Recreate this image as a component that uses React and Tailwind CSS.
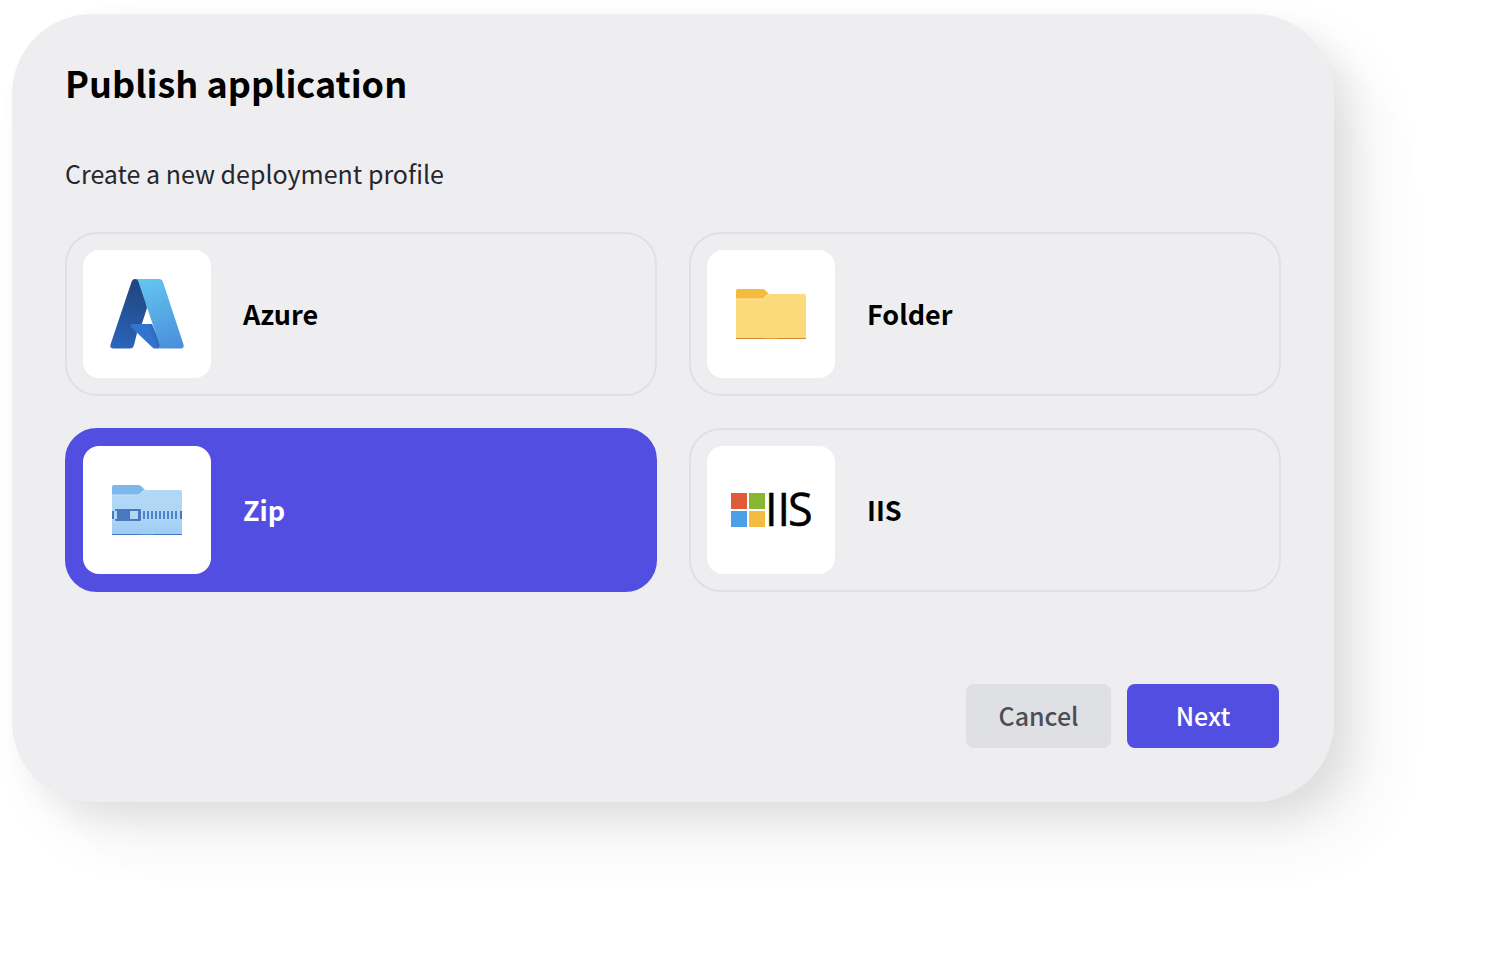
import React, { useState } from "react";

function AzureIcon() {
  return (
    <svg viewBox="0 0 128 128" className="w-full h-full" aria-hidden="true">
      <defs>
        <linearGradient id="azureLeft" x1="55" y1="30" x2="40" y2="99" gradientUnits="userSpaceOnUse">
          <stop offset="0" stopColor="#20457f" />
          <stop offset="0.5" stopColor="#25549b" />
          <stop offset="1" stopColor="#2a66bb" />
        </linearGradient>
        <linearGradient id="azureRight" x1="62" y1="30" x2="88" y2="98" gradientUnits="userSpaceOnUse">
          <stop offset="0" stopColor="#64c5ef" />
          <stop offset="1" stopColor="#4990dc" />
        </linearGradient>
        <linearGradient id="azureFold" x1="58" y1="86" x2="75" y2="80" gradientUnits="userSpaceOnUse">
          <stop offset="0.5" stopColor="#3275d0" />
          <stop offset="1" stopColor="#2a5fad" />
        </linearGradient>
      </defs>
      <path
        d="M52 29H60L64 58L58.500 75H52L54 83L51 95Q50 98.500 47 98.500H30.500Q26.500 98.500 27.500 94.500L48.500 32Q49.500 29 52 29Z"
        fill="url(#azureLeft)"
      />
      <path
        d="M49 74H69L77 93Q78 98.500 74 98.500H71.500Q70.500 98.500 69 97L48 77Q46.500 74.500 49 74Z"
        fill="url(#azureFold)"
      />
      <path
        d="M52 29H76Q79 29 80 32L100.500 94.500Q101.500 98.500 97.500 98.500H73.500Q77.500 98.500 76.500 94.500L55.500 32Q54.500 29 52 29Z"
        fill="url(#azureRight)"
      />
    </svg>
  );
}

function FolderIcon() {
  return (
    <svg viewBox="0 0 128 128" className="w-full h-full" aria-hidden="true">
      <defs>
        <linearGradient id="folderBody" x1="0" y1="0" x2="0" y2="1">
          <stop offset="0" stopColor="#fadb7b" />
          <stop offset="1" stopColor="#fad978" />
        </linearGradient>
      </defs>
      <path d="M29 50V41Q29 39 31 39H55Q57 39 58 40L62 44L55 50Z" fill="#f5bb41" />
      <path d="M29 49H54Q56 49 57 48L60 45Q61 44 63 44H97Q99 44 99 46V89H29Z" fill="url(#folderBody)" />
      <path d="M29 49H54Q56 49 57 48L60 45Q61 44 63 44" fill="none" stroke="#fbe7a8" />
      <path d="M29 88H99V89H29Z" fill="#d08835" />
      <path d="M57 88H71V89H57Z" fill="#e19c3b" />
    </svg>
  );
}

function ZipIcon() {
  const teeth = [60, 64, 68, 72, 76, 80, 84, 88, 92];
  return (
    <svg viewBox="0 0 128 128" className="w-full h-full" aria-hidden="true">
      <defs>
        <linearGradient id="zipBody" x1="0" y1="0" x2="0" y2="1">
          <stop offset="0" stopColor="#b2d8f6" />
          <stop offset="0.6" stopColor="#afd5f5" />
          <stop offset="1" stopColor="#9bccf3" />
        </linearGradient>
      </defs>
      <path d="M29 50V41Q29 39 31 39H55Q57 39 58 40L62 44L55 50Z" fill="#7db8ec" />
      <path d="M29 49H54Q56 49 57 48L60 45Q61 44 63 44H97Q99 44 99 46V89H29Z" fill="url(#zipBody)" />
      <path d="M29 49H54Q56 49 57 48L60 45Q61 44 63 44" fill="none" stroke="#c8e4fa" />
      <path d="M29 88H99V89H29Z" fill="#4277bf" />
      <path d="M57 88H71V89H57Z" fill="#5289cf" />
      <rect x="29" y="65" width="2" height="8" fill="#4778c0" />
      {teeth.map((x) => (
        <rect key={x} x={x} y="65" width="2" height="8" fill="#5184c8" />
      ))}
      <rect x="97" y="65" width="2" height="8" fill="#4778c0" />
      <rect x="32" y="63" width="26" height="12" rx="1" fill="#4778c0" />
      <rect x="32" y="65" width="2" height="8" fill="#b5d6f3" />
      <rect x="47" y="65" width="8" height="8" fill="#b5d6f3" />
    </svg>
  );
}

function IisIcon() {
  return (
    <svg viewBox="0 0 128 128" className="w-full h-full" aria-hidden="true">
      <rect x="24" y="47" width="16" height="16" fill="#de5c37" />
      <rect x="42" y="47" width="16" height="16" fill="#8ab636" />
      <rect x="24" y="65" width="16" height="16" fill="#4a9fe8" />
      <rect x="42" y="65" width="16" height="16" fill="#f4bb42" />
      <text x="58" y="80" fontSize="45" fill="#000" stroke="#000" strokeWidth="0.5" fontFamily="'Open Sans', sans-serif">
        <tspan>II</tspan>
        <tspan x="81">S</tspan>
      </text>
    </svg>
  );
}

const profiles = [
  { id: "azure", name: "Azure", Icon: AzureIcon },
  { id: "folder", name: "Folder", Icon: FolderIcon },
  { id: "zip", name: "Zip", Icon: ZipIcon },
  { id: "iis", name: "IIS", Icon: IisIcon },
];

function App() {
  const [selected, setSelected] = useState("zip");

  return (
    <div className="pt-[14px] pl-3 pr-[174px] pb-24 font-['Noto_Sans_CJK_SC',sans-serif]">
      <form
        className="rounded-[80px] bg-[#eeeef0] px-[53px] pt-11 pb-[54px] shadow-[16px_16px_32px_rgba(0,0,0,0.07),32px_32px_64px_rgba(0,0,0,0.06),64px_64px_96px_rgba(0,0,0,0.01)]"
        onSubmit={(e) => e.preventDefault()}
      >
        <h1 className="text-[36px] leading-12 font-bold text-black">Publish application</h1>
        <fieldset className="mt-[51px]">
          <legend className="text-[25px] leading-8 text-[#26262c]">Create a new deployment profile</legend>
          {/* Deployment targets */}
          <div className="mt-[43px] grid grid-cols-2 gap-8">
            {profiles.map(({ id, name, Icon }) => (
              <label
                key={id}
                className={`flex items-center gap-8 rounded-[32px] border-2 p-4 cursor-pointer ${
                  selected === id
                    ? "border-[#524ee1] bg-[#524ee1] text-white"
                    : "border-[#e0e0e3] text-black"
                }`}
              >
                <input
                  type="radio"
                  name="profile"
                  value={id}
                  checked={selected === id}
                  onChange={() => setSelected(id)}
                  className="sr-only"
                />
                <span className="size-32 shrink-0 overflow-hidden rounded-2xl bg-white">
                  <Icon />
                </span>
                <span className="text-[27px] leading-8 font-bold">{name}</span>
              </label>
            ))}
          </div>
        </fieldset>
        <div className="mt-[92px] flex justify-end gap-4 pr-[2px] text-[25px] leading-8 font-medium">
          <button type="button" className="h-16 w-[145px] rounded-lg bg-[#dfe0e4] pb-[2px] text-[#4d4e55]">
            Cancel
          </button>
          <button type="submit" className="h-16 w-[152px] rounded-lg bg-[#524ee1] pb-[2px] text-white">
            Next
          </button>
        </div>
      </form>
    </div>
  );
}

export default App;
